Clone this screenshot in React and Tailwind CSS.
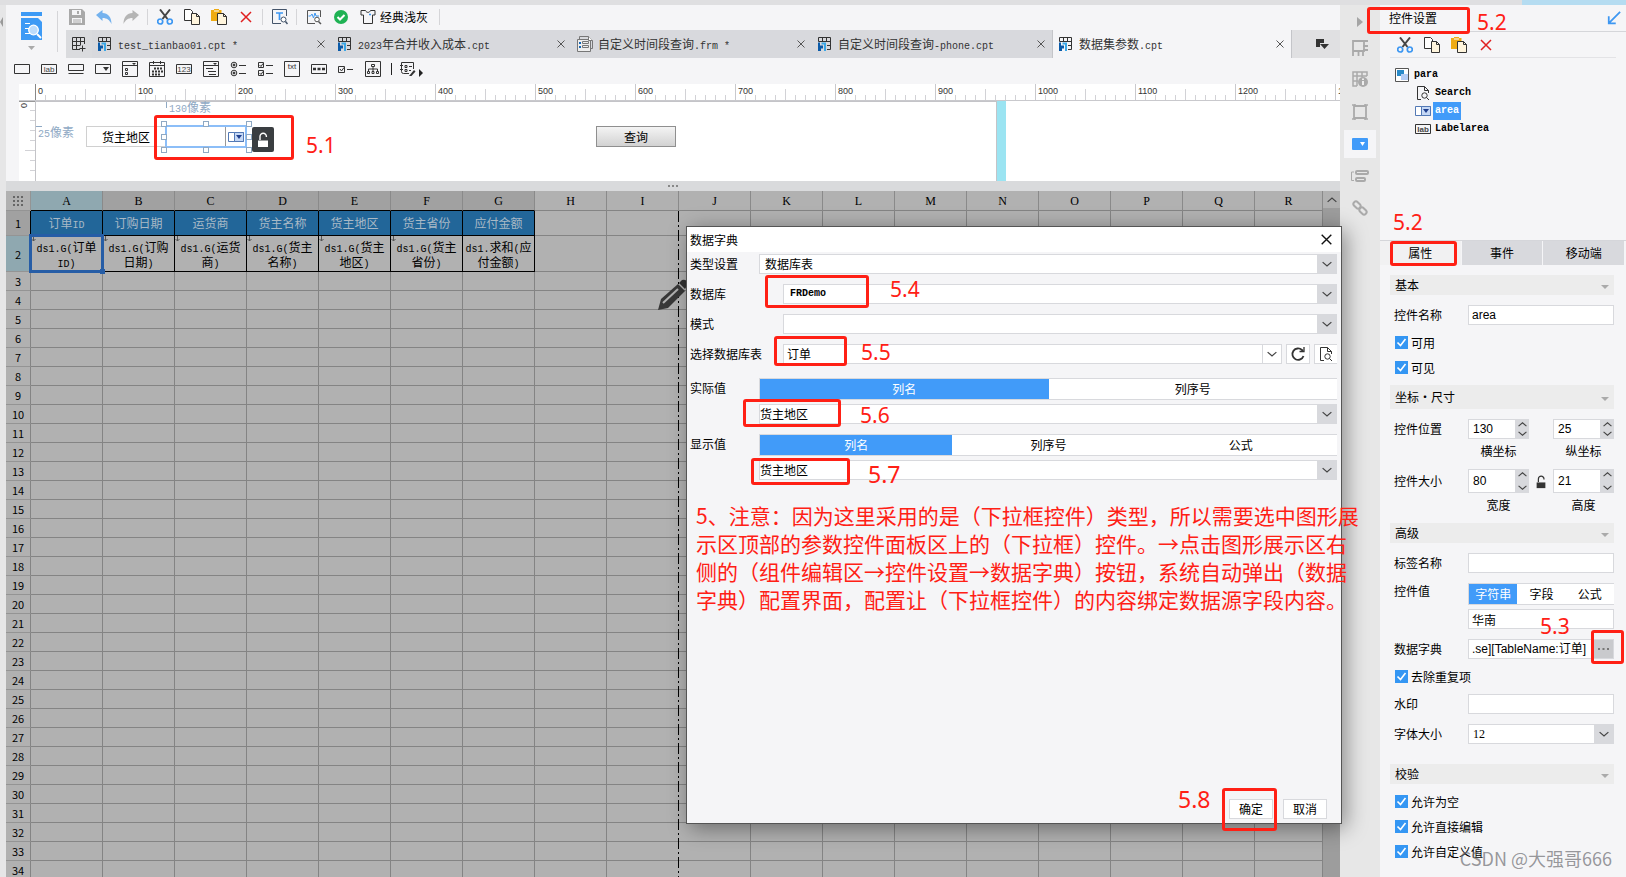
import React from "react";
import clsx from "clsx";

const SANS = "font-['Liberation_Sans','Noto_Sans_CJK_SC',sans-serif]";

/* ---------- text helpers ---------- */

// Latin runs are set in a smaller monospaced face, half as wide as the Chinese glyphs
const Mixed = ({ text }) => (
  <span className="whitespace-pre">
    {text
      .split(/([\x20-\x7e]+)/)
      .filter(Boolean)
      .map((part, i) => (
        <span
          key={i}
          className={/^[\x20-\x7e]/.test(part) ? "font-['Liberation_Mono',monospace] text-[10px] leading-[0px]" : ""}
        >
          {part}
        </span>
      ))}
  </span>
);

/* ---------- icons ---------- */

const Svg = ({ size = 16, color = "#333", children, className }) => (
  <svg
    width={size}
    height={size}
    viewBox="0 0 16 16"
    fill="none"
    stroke={color}
    strokeWidth="1"
    className={clsx("shrink-0", className)}
  >
    {children}
  </svg>
);

const SaveIcon = () => (
  <Svg color="none">
    <path d="M0 0h13l3 3v13H0z" fill="#a9a9a9" />
    <path d="M3 1h9v5H3zM3 9h10v5H3z" fill="#f5f5f7" />
    <path d="M8 2h2v3H8zM4 10.500h8v1H4zM4 12.500h8v1H4z" fill="#a9a9a9" />
  </Svg>
);

const UndoIcon = () => (
  <Svg color="none">
    <path d="M0 6 6.500 1v3C12 4 15.500 8 15.500 15 13.500 11 11 9 6.500 9v3z" fill="#74b2ee" />
  </Svg>
);

const RedoIcon = () => (
  <Svg color="none">
    <path d="M16 6 9.500 1v3C4 4 .5 8 .5 15 2.500 11 5 9 9.500 9v3z" fill="#b5b5b5" />
  </Svg>
);

const CutIcon = () => (
  <Svg>
    <path d="M3 .5 10.500 10M13 .5 5.500 10" strokeWidth="2" stroke="#444" />
    <circle cx="3.200" cy="12.500" r="2.500" stroke="#3d97f2" strokeWidth="1.700" />
    <circle cx="12.800" cy="12.500" r="2.500" stroke="#3d97f2" strokeWidth="1.700" />
  </Svg>
);

const CopyIcon = () => (
  <Svg>
    <path d="M.5.5h6l2 2v9h-8z" fill="#fff" />
    <path d="M7.500 4.500h5l3 3v8h-8z" fill="#fff5dd" />
    <path d="M12.500 4.500v3h3" />
  </Svg>
);

const PasteIcon = () => (
  <Svg>
    <path d="M0 1h3V0h5v1h2.500v11H0z" fill="#efab12" stroke="none" />
    <path d="M3 2h5" stroke="#fff" />
    <path d="M6.500 4.500h6l3 3v8h-9z" fill="#fff5dd" />
    <path d="M12.500 4.500v3h3" />
  </Svg>
);

const DeleteIcon = () => (
  <Svg color="#e02020">
    <path d="M3 3l10 10M13 3L3 13" strokeWidth="1.500" />
  </Svg>
);

const FindTextIcon = () => (
  <Svg color="#44546a">
    <path d="M9 14.500H.5V.5h14V7" />
    <path d="M4 4h7M7.500 4v7" stroke="#3d97f2" strokeWidth="1.700" />
    <circle cx="11.500" cy="10.500" r="2.500" fill="#fff" />
    <path d="M13.500 12.500l2 2.500" strokeWidth="1.500" />
  </Svg>
);

const PulseIcon = () => (
  <Svg color="#555">
    <path d="M9 14.500H1.500V1.500h13V8" />
    <path d="M2.500 7h2l1.500-2 1.500 4L9 4l1 3h3" stroke="#3d97f2" />
    <circle cx="11" cy="10.500" r="2.300" fill="#fff" />
    <path d="M12.500 12.500l2.500 2.500" strokeWidth="1.500" />
  </Svg>
);

const OkIcon = () => (
  <Svg color="none">
    <circle cx="8" cy="8" r="7" fill="#1fb254" />
    <path d="M4.500 8l2.500 2.500 4.500-4.500" stroke="#fff" strokeWidth="2" />
  </Svg>
);

const ShirtIcon = () => (
  <Svg>
    <path d="M1 1.500h4.500C6.500 4 9.500 4 10.500 1.500H15v4.500h-2.500v8.500h-9V6H1z" />
    <path d="M9 5.500h2" stroke="#3d97f2" strokeWidth="1.500" />
  </Svg>
);

const GridPlusIcon = () => (
  <Svg>
    <path d="M9 13.500H1.500v-12h12V8M1.500 5.500h12M1.500 9.500h8M5.500 1.500v12M9.500 1.500V9M8.500 12.500h6M11.500 9.500v6" />
  </Svg>
);

const CptIcon = () => (
  <Svg>
    <path d="M1.500 5.500v-4h12v12H10M1.500 5.500h12M5.500 1.500v4M9.500 1.500v4M10 9.500h4" />
    <path d="M1 6.500h2v3h3v3H4V15H1z" fill="#0a5aa8" stroke="none" />
    <path d="M4.500 6.500H9V15H7V8.500H4.500z" fill="#3ba7e6" stroke="none" />
  </Svg>
);

const FrmIcon = () => (
  <Svg color="#777">
    <path d="M2.500 3.500V.5h9l4 4v8h-2" />
    <path d="M.5 3.500h13v12H.5z" fill="#eee" />
    <path d="M2 6h2v2H2zM2 10h2v2H2z" fill="#1768b5" stroke="none" />
    <path d="M5.500 5.500h6v2h-6zM5.500 9.500h6v2h-6z" />
    <path d="M11.500.5v4h4" fill="#fff" />
  </Svg>
);

const CloseIcon = ({ size = 8, color = "#555" }) => (
  <Svg size={size} color={color}>
    <path d="M1 1l14 14M15 1L1 15" strokeWidth="2" />
  </Svg>
);

const Chevron = ({ up, size = 10 }) => (
  <Svg size={size} color="#444" className={up ? "rotate-180" : ""}>
    <path d="M1 5l7 6 7-6" strokeWidth="2" />
  </Svg>
);

const SearchDocIcon = () => (
  <Svg>
    <path d="M6 14.500H2.500V1.500h7l4 4V8M9.500 1.500v4h4" />
    <circle cx="9.500" cy="10.500" r="2.700" />
    <path d="M11.500 12.500l2.500 2.500" />
  </Svg>
);

const RefreshIcon = () => (
  <Svg>
    <path d="M13.500 10A5.700 5.700 0 1 1 12 4l1 1" strokeWidth="1.800" />
    <path d="M9.500 5.500H14V1" fill="none" strokeWidth="1.300" />
  </Svg>
);

const UnlockIcon = ({ color = "#333", size = 16 }) => (
  <Svg size={size} color={color}>
    <path d="M5 8V4.500a3.200 3.200 0 0 1 6.400 0V5" strokeWidth="1.400" />
    <path d="M3 8.500h10V15H3z" fill={color} stroke="none" />
  </Svg>
);

const ComboIcon = () => (
  <Svg color="#5379b5">
    <path d="M.5 3.500h15v9H.5z" fill="#fff" />
    <path d="M6.500 3.500h9v9h-9z" fill="#c5d8f5" />
    <path d="M8 6h6l-3 4z" fill="#1f3f8f" stroke="none" />
  </Svg>
);

const LabIcon = ({ label = "lab" }) => (
  <Svg>
    <path d="M.5 3.500h15v9H.5z" />
    <text x="8" y="11" fontSize="8" textAnchor="middle" fill="#444" stroke="none" fontFamily="Liberation Sans">
      {label}
    </text>
  </Svg>
);

// Palette of form widgets that can be dropped on the parameter pane
const widgetIcons = [
  <Svg><path d="M.5 3.500h15v9H.5z" /></Svg>,
  <LabIcon />,
  <Svg><path d="M.5 3.500h15v6H.5zM.5 12.500h15" /></Svg>,
  <Svg><path d="M.5 3.500h15v9H.5z" /><path d="M8 6h6l-3 4z" fill="#333" stroke="none" /></Svg>,
  <Svg>
    <path d="M.5.5h15v15H.5zM.5 4.500h15M3.500 7.500h2v2h-2zM3.500 11.500h2v2h-2z" />
    <path d="M10 2h4l-2 2z" fill="#333" stroke="none" />
  </Svg>,
  <Svg>
    <path d="M.5 1.500h15v14H.5zM.5 4.500h15M4.500 0v3M11.500 0v3" />
    <path d="M5 7.500h9M3 10.500h11M3 13.500h8" strokeDasharray="2 1" strokeWidth="2" />
  </Svg>,
  <LabIcon label="123" />,
  <Svg>
    <path d="M.5.5h15v15H.5zM.5 4.500h15M3 7.500h7M5 10.500h8M6 13.500h7" />
    <path d="M10 2h4l-2 2z" fill="#333" stroke="none" />
  </Svg>,
  <Svg>
    <circle cx="4" cy="4" r="2.800" /><circle cx="4" cy="12" r="2.800" />
    <circle cx="4" cy="4" r="1" fill="#333" /><circle cx="4" cy="12" r="1" fill="#333" />
    <path d="M9 4.500h7M9 12.500h7" />
  </Svg>,
  <Svg><path d="M1.500 1.500h5v5h-5zM1.500 9.500h5v5h-5zM9 4.500h7M9 12.500h7M2.500 4l1.500 1.500L6 2.500M2.500 12l1.500 1.500 2-3" /></Svg>,
  <Svg>
    <path d="M.5.5h15v15H.5z" />
    <text x="8" y="8" fontSize="8" textAnchor="middle" fill="#333" stroke="none" fontFamily="Liberation Sans">txt</text>
  </Svg>,
  <Svg>
    <path d="M.5 3.500h15v9H.5z" />
    <path d="M2 8h3M6.500 8h3M11 8h3" strokeWidth="2.500" />
  </Svg>,
  <Svg><path d="M.5 5.500h6v6h-6zM9 8.500h6M2 8l1.500 2L6 6.500" /></Svg>,
  <Svg><path d="M.5.500h15v15H.5zM6.500 3.500h3v2h-3zM2.500 10.500h2v2h-2zM7 10.500h2v2H7zM11.500 10.500h2v2h-2zM8 6v4M3.500 10V8h9v2" /></Svg>,
];

/* ---------- top area ---------- */

const IconButton = ({ label, children }) => (
  <button type="button" aria-label={label} className="flex h-[24px] w-[27px] items-center justify-center">
    {children}
  </button>
);

const Divider = () => (
  <div className="flex h-[16px] w-[7px] justify-center">
    <div className="w-px bg-[#d5d5d8]" />
  </div>
);

const tabs = [
  { name: "test_tianbao01.cpt *", icon: <CptIcon /> },
  { name: "2023年合并收入成本.cpt", icon: <CptIcon /> },
  { name: "自定义时间段查询.frm *", icon: <FrmIcon /> },
  { name: "自定义时间段查询-phone.cpt", icon: <CptIcon /> },
  { name: "数据集参数.cpt", icon: <CptIcon />, active: true },
];

const Header = () => (
  <header className="flex h-[53px] shrink-0">
    <button type="button" aria-label="预览" className="flex w-[51px] shrink-0 flex-col items-center gap-[6px] pt-[7px]">
      <svg width="22" height="28" viewBox="0 0 22 28">
        <path d="M0 0h21v4H0zM0 6h17l4 4v18H0z" fill="#3d9af5" />
        <path d="M4 11h5v1H4zM4 16h4v1H4zM4 21h5v1H4z" fill="#fff" />
        <circle cx="12.500" cy="18" r="4.800" fill="#bcdcfb" stroke="#fff" strokeWidth="1.300" />
        <path d="M16 22l4 4" stroke="#fff" strokeWidth="2" />
      </svg>
      <svg width="7" height="4" viewBox="0 0 7 4"><path d="M0 0h7L3.500 4z" fill="#aaa" /></svg>
    </button>
    <div className="my-[6px] w-px shrink-0 bg-[#d5d5d8]" />
    <div className="flex min-w-0 flex-1 flex-col pl-[5px]">
      <div className="flex h-[24px] items-center">
        <IconButton label="保存"><SaveIcon /></IconButton>
        <IconButton label="撤销"><UndoIcon /></IconButton>
        <IconButton label="重做"><RedoIcon /></IconButton>
        <Divider />
        <IconButton label="剪切"><CutIcon /></IconButton>
        <IconButton label="复制"><CopyIcon /></IconButton>
        <IconButton label="粘贴"><PasteIcon /></IconButton>
        <IconButton label="删除"><DeleteIcon /></IconButton>
        <Divider />
        <IconButton label="查找"><FindTextIcon /></IconButton>
        <Divider />
        <IconButton label="性能检测"><PulseIcon /></IconButton>
        <IconButton label="校验"><OkIcon /></IconButton>
        <button type="button" className="flex items-center gap-[4px] pl-[6px] pr-[8px] text-[12px]">
          <ShirtIcon />
          经典浅灰
        </button>
        <Divider />
      </div>
      <nav className="mt-px ml-[3px] flex h-[28px] bg-[#e0e0e2]">
        <button type="button" aria-label="新建" className="flex w-[26px] shrink-0 items-center justify-center bg-[#dadbde]">
          <GridPlusIcon />
        </button>
        {tabs.map((tab) => (
          <div
            key={tab.name}
            className={clsx(
              "flex w-[240px] shrink-0 items-center pl-[5px] pr-[7px]",
              tab.active ? "border-x border-[#c4c5c9] bg-[#f5f5f7]" : "bg-[#d8d9dd]"
            )}
          >
            {tab.icon}
            <a href="#tab" className="ml-[5px] flex-1 text-[12px] leading-[18px] text-[#333]">
              <Mixed text={tab.name} />
            </a>
            <button type="button" aria-label="关闭"><CloseIcon /></button>
          </div>
        ))}
        <button type="button" aria-label="更多" className="flex flex-1 items-center pl-[24px]">
          <svg width="13" height="10" viewBox="0 0 13 10">
            <path d="M0 0h8v4H4v4H0zM4 5h9L8.500 10z" fill="#333" />
          </svg>
        </button>
      </nav>
    </div>
  </header>
);

const WidgetBar = () => (
  <div className="flex h-[26px] shrink-0 items-start pl-[2px]">
    {widgetIcons.map((icon, i) => (
      <button key={i} type="button" aria-label={`控件${i + 1}`} className="flex h-[22px] w-[27px] items-center justify-center">
        {icon}
      </button>
    ))}
    <div className="mx-[5px] mt-[5px] h-[12px] w-px bg-[#222]" />
    <button type="button" aria-label="更多控件" className="flex h-[22px] items-center gap-[3px] pl-[3px]">
      <Svg>
        <path d="M9 12.500H3.500a2 2 0 0 1-2-2v-9h12V8M0 4.500h3M0 8.500h3M5 4.500h2v2H5zM9 5.500h3M5 8.500h2v2H5zM9 9.500h2" />
        <path d="M9 15l5-6 1.500 1.500-4 4.500z" fill="#333" stroke="none" />
      </Svg>
      <svg width="4" height="8" viewBox="0 0 4 8" className="mt-[8px]"><path d="M0 0l4 4-4 4z" fill="#222" /></svg>
    </button>
  </div>
);

/* ---------- parameter pane ---------- */

const Ruler = () => (
  <div className="ml-[13px] flex h-[17px] shrink-0 overflow-hidden border-b border-[#c9c9cd] bg-white pl-[16px]">
    {Array.from({ length: 14 }, (_, i) => (
      <div key={i} className="flex w-[100px] shrink-0">
        <svg width="100" height="17" viewBox="0 0 100 17" className="shrink-0">
          <path d="M.5 0v17" stroke={i === 0 ? "#888" : "#c9c9cd"} />
          <path d="M10.500 11v6M20.500 11v6M30.500 11v6M40.500 11v6M50.500 5v12M60.500 11v6M70.500 11v6M80.500 11v6M90.500 11v6" stroke="#d2d2d6" />
          <text x="3" y="10" fontSize="9" fill="#333" fontFamily="Liberation Sans">{i * 100}</text>
        </svg>
      </div>
    ))}
  </div>
);

const Handle = ({ className }) => (
  <span className={clsx("absolute size-[6px] border border-[#8fa9c4] bg-white", className)} />
);

const ParameterPane = () => (
  <section className="ml-[13px] flex h-[80px] shrink-0 bg-white">
    <svg width="17" height="80" viewBox="0 0 17 80" className="shrink-0">
      <path d="M16.500 0v80" stroke="#c4c4c8" />
      <path d="M11 9.500h5M11 19.500h5M11 29.500h5M11 39.500h5M6 49.500h10M11 59.500h5M11 69.500h5" stroke="#d2d2d6" />
      <path d="M0 .5h16" stroke="#999" />
      <text x="-7" y="8" fontSize="9" fill="#333" fontFamily="Liberation Sans" transform="rotate(-90)">0</text>
    </svg>
    {/* free canvas: widgets sit at their own coordinates */}
    <div className="relative w-[961px] border-r border-t border-[#c4c4c8]">
      <span className="absolute left-[130px] top-0 h-[6px] w-px bg-[#8fa9c4]" />
      <span className="absolute left-[133px] top-[-2px] text-[12px] leading-[14px] text-[#8fa9c4]"><Mixed text="130像素" /></span>
      <span className="absolute left-0 top-[24px] h-px w-[6px] bg-[#8fa9c4]" />
      <span className="absolute left-[2px] top-[23px] text-[12px] leading-[14px] text-[#8fa9c4]"><Mixed text="25像素" /></span>
      <label
        htmlFor="area-combo"
        className="absolute left-[50px] top-[24px] flex h-[21px] w-[80px] items-center border border-[#d0d0d0] pl-[15px] text-[12px]"
      >
        货主地区
      </label>
      <div className="absolute left-[129px] top-[23px] flex h-[23px] w-[82px] border-2 border-[#8cbef8] bg-white">
        <input id="area-combo" readOnly className="w-[59px] border-r border-[#999] outline-none" />
        <button type="button" aria-label="展开" className="flex flex-1 items-center justify-center"><ComboIcon /></button>
      </div>
      <Handle className="left-[125px] top-[19px]" />
      <Handle className="left-[167px] top-[19px]" />
      <Handle className="left-[210px] top-[19px]" />
      <Handle className="left-[125px] top-[32px]" />
      <Handle className="left-[210px] top-[32px]" />
      <Handle className="left-[125px] top-[45px]" />
      <Handle className="left-[167px] top-[45px]" />
      <Handle className="left-[210px] top-[45px]" />
      <button
        type="button"
        aria-label="解锁"
        className="absolute left-[216px] top-[25px] flex h-[25px] w-[22px] items-center justify-center rounded-[2px] bg-[#3a3e41]"
      >
        <UnlockIcon color="#fff" />
      </button>
      <button
        type="button"
        className="absolute left-[560px] top-[24px] h-[21px] w-[80px] border border-[#8f8f8f] bg-linear-to-b from-[#f4f4f4] to-[#d2d2d2] text-[12px] leading-[18px]"
      >
        查询
      </button>
    </div>
    <div className="w-[9px] bg-[#9be4f2]" />
  </section>
);

/* ---------- report grid ---------- */

const columns = "ABCDEFGHIJKLMNOPQR".split("");
const titles = ["订单ID", "订购日期", "运货商", "货主名称", "货主地区", "货主省份", "应付金额"];
const formulas = [
  ["ds1.G(订单", "ID)"],
  ["ds1.G(订购", "日期)"],
  ["ds1.G(运货", "商)"],
  ["ds1.G(货主", "名称)"],
  ["ds1.G(货主", "地区)"],
  ["ds1.G(货主", "省份)"],
  ["ds1.求和(应", "付金额)"],
];

const RowHead = ({ n, className }) => (
  <th
    scope="row"
    className={clsx(
      "border-b border-r border-b-[#949494] p-0 text-center font-['Noto_Sans_CJK_SC',sans-serif] text-[11px] leading-[16px] font-normal",
      className
    )}
  >
    {n}
  </th>
);

const Sheet = () => (
  <section className="relative flex min-h-0 flex-1 overflow-hidden bg-[#b1b1b1]">
    <div className="min-w-0 flex-1 overflow-hidden">
      <table className="w-full table-fixed border-separate border-spacing-0 text-[12px]">
        <thead>
          <tr className="h-[20px]">
            <th className="w-[25px] border-b border-r border-[#949494] p-0">
              <svg width="12" height="10" viewBox="0 0 12 10" className="mx-auto">
                <path d="M1 1h2M5 1h2M9 1h2M1 5h2M5 5h2M9 5h2M1 9h2M5 9h2M9 9h2" stroke="#666" strokeWidth="2" />
              </svg>
            </th>
            {columns.map((name, i) => (
              <th
                key={name}
                scope="col"
                className={clsx(
                  "border-b border-r border-r-[#8a8a8a] p-0 font-['Liberation_Serif',serif] text-[12px] leading-[18px] font-normal",
                  i < 17 && "w-[72px]",
                  i === 0 && "bg-[#8fa8b0]",
                  i > 0 && i < 7 && "bg-[#a1a1a1]",
                  i < 7 ? "border-b-black" : "border-b-[#848484]"
                )}
              >
                {name}
              </th>
            ))}
          </tr>
        </thead>
        <tbody>
          <tr className="h-[25px]">
            <RowHead n={1} className="border-r-black bg-[#a1a1a1]" />
            {columns.map((name, i) =>
              i < 7 ? (
                <td key={name} className="border-b border-r border-black bg-[#226699] p-0 text-center text-[#a9b9c6]">
                  <Mixed text={titles[i]} />
                </td>
              ) : (
                <td key={name} className="border-b border-r border-[#848484] p-0" />
              )
            )}
          </tr>
          <tr className="h-[36px]">
            <RowHead n={2} className="border-r-black bg-[#8fa8b0]" />
            {columns.map((name, i) =>
              i < 7 ? (
                <td key={name} className="relative border-b border-r border-black p-0 text-center leading-[15px]">
                  <Mixed text={formulas[i][0]} />
                  <br />
                  <Mixed text={formulas[i][1]} />
                  {i < 6 && (
                    <svg width="5" height="6" viewBox="0 0 5 6" className="absolute left-0 top-0">
                      <path d="M2.500 0v5M.5 3l2 2 2-2" stroke="#555" fill="none" />
                    </svg>
                  )}
                  {i === 0 && (
                    <>
                      <span className="absolute inset-[-2px] z-10 border-[3px] border-[#265da6]" />
                      <span className="absolute right-[-3px] bottom-[-3px] z-10 size-[5px] bg-[#265da6]" />
                    </>
                  )}
                </td>
              ) : (
                <td key={name} className="border-b border-r border-[#848484] p-0" />
              )
            )}
          </tr>
          {Array.from({ length: 32 }, (_, r) => (
            <tr key={r} className="h-[19px]">
              <RowHead n={r + 3} className="border-r-[#848484]" />
              {columns.map((name) => (
                <td key={name} className="border-b border-r border-[#848484] p-0" />
              ))}
            </tr>
          ))}
        </tbody>
      </table>
    </div>
    <div className="w-[17px] shrink-0 bg-[#9d9d9d]">
      <button type="button" aria-label="向上滚动" className="flex h-[17px] w-full items-center justify-center bg-[#b1b1b1]">
        <Chevron up />
      </button>
    </div>
    {/* page break */}
    <div className="absolute top-[20px] bottom-0 left-[672px] w-px bg-[repeating-linear-gradient(to_bottom,#000_0px,#000_11px,#b1b1b1_11px,#b1b1b1_14px,#000_14px,#000_16px,#b1b1b1_16px,#b1b1b1_19px)]" />
    <svg width="34" height="34" viewBox="0 0 34 34" className="absolute left-[650px] top-[87px]">
      <path d="M2 32l3-11L22 6l7 7-17 17z" fill="#383838" />
      <path d="M7 25L22 11" stroke="#b1b1b1" strokeWidth="2" />
      <path d="M23 5l3-3q5-1 6 4l-3 5z" fill="#333" />
    </svg>
  </section>
);

/* ---------- dialog ---------- */

const Combo = ({ id, value, className, textClass, flat }) => (
  <div className={clsx("relative flex h-[20px] border border-[#d8d9dd] bg-white", className)}>
    <select
      id={id}
      defaultValue={value}
      className={clsx("min-w-0 flex-1 appearance-none bg-transparent pr-[20px] text-[12px] leading-[18px] outline-none", textClass)}
    >
      <option value={value}>{value}</option>
    </select>
    <span
      className={clsx(
        "pointer-events-none absolute inset-y-[-1px] right-[-1px] flex w-[20px] items-center justify-center",
        flat ? "border border-[#d8d9dd]" : "bg-[#d8d9dd]"
      )}
    >
      <Chevron />
    </span>
  </div>
);

const Segmented = ({ items, className }) => (
  <div className={clsx("flex h-[22px] border-y border-l border-[#d8d9dd] bg-white text-[12px]", className)}>
    {items.map((item, i) => (
      <button key={item} type="button" className={clsx("flex-1 leading-[20px]", i === 0 && "bg-[#419bf9] text-white")}>
        {item}
      </button>
    ))}
  </div>
);

const DialogLabel = ({ htmlFor, children }) => (
  <label htmlFor={htmlFor} className="w-[69px] shrink-0 whitespace-nowrap leading-[20px]">
    {children}
  </label>
);

const Dialog = () => (
  <div
    role="dialog"
    aria-label="数据字典"
    className="absolute left-[686px] top-[226px] z-20 flex h-[598px] w-[656px] flex-col border border-[#555] bg-[#f5f5f7] text-[12px] shadow-[4px_4px_20px_rgba(0,0,0,0.4)]"
  >
    <div className="flex h-[25px] items-center justify-between bg-white pl-[3px] pr-[9px]">
      <h2 className="leading-[16px]">数据字典</h2>
      <button type="button" aria-label="关闭"><CloseIcon size={11} color="#111" /></button>
    </div>
    <form className="flex flex-1 flex-col pl-[3px] pr-[4px] pt-[2px]">
      <div className="flex">
        <DialogLabel htmlFor="d-type">类型设置</DialogLabel>
        <Combo id="d-type" value="数据库表" className="flex-1" textClass="pl-[5px]" />
      </div>
      <div className="mt-[10px] flex">
        <DialogLabel htmlFor="d-db">数据库</DialogLabel>
        <Combo id="d-db" value="FRDemo" className="ml-[24px] flex-1" textClass="pl-[6px] font-['Liberation_Mono',monospace] !text-[10px] font-semibold" />
      </div>
      <div className="mt-[10px] flex">
        <DialogLabel htmlFor="d-schema">模式</DialogLabel>
        <Combo id="d-schema" value="" className="ml-[24px] flex-1" />
      </div>
      <div className="mt-[10px] flex">
        <DialogLabel htmlFor="d-table">选择数据库表</DialogLabel>
        <Combo id="d-table" value="订单" className="ml-[24px] flex-1" textClass="pl-[3px]" flat />
        <button type="button" aria-label="刷新" className="ml-[4px] flex h-[20px] w-[24px] items-center justify-center border border-[#d8d9dd] bg-white">
          <RefreshIcon />
        </button>
        <button type="button" aria-label="预览" className="ml-[4px] flex h-[20px] w-[23px] items-center justify-center border border-r-0 border-[#d8d9dd] bg-white">
          <SearchDocIcon />
        </button>
      </div>
      <div className="mt-[14px] flex">
        <DialogLabel htmlFor="d-actual">实际值</DialogLabel>
        <div className="flex-1">
          <Segmented items={["列名", "列序号"]} />
          <Combo id="d-actual" value="货主地区" className="mt-[4px]" />
        </div>
      </div>
      <div className="mt-[10px] flex">
        <DialogLabel htmlFor="d-display">显示值</DialogLabel>
        <div className="flex-1">
          <Segmented items={["列名", "列序号", "公式"]} />
          <Combo id="d-display" value="货主地区" className="mt-[4px]" />
        </div>
      </div>
      <div className="mt-auto mr-[10px] mb-[4px] flex justify-end gap-[10px]">
        <button type="button" className="h-[20px] w-[44px] border border-[#d8d9dd] bg-white leading-[18px]">确定</button>
        <button type="button" className="h-[20px] w-[44px] border border-[#d8d9dd] bg-white leading-[18px]">取消</button>
      </div>
    </form>
  </div>
);

/* ---------- right side ---------- */

const SideStrip = () => (
  <aside className="flex w-[40px] shrink-0 flex-col items-center bg-[#e7e7e7]">
    <button type="button" aria-label="收起" className="flex h-[29px] items-center pt-[4px]">
      <svg width="6" height="10" viewBox="0 0 6 10"><path d="M0 0l6 5-6 5z" fill="#a5a5a5" /></svg>
    </button>
    <button type="button" aria-label="单元格元素" className="flex h-[28px] items-center">
      <Svg color="#aaa"><path d="M1 15V1h15M1 11h11V1M6.500 11v5M11 11v5M1 15v1M11 6h5M11 10h5" strokeWidth="1.800" /></Svg>
    </button>
    <button type="button" aria-label="单元格属性" className="flex h-[34px] items-center">
      <Svg color="#aaa">
        <path d="M5 15H1V1h14v4M1 5h14M5 1v14M10 1v5M1 10h5" strokeWidth="1.500" />
        <circle cx="11" cy="11" r="5" fill="#aaa" stroke="none" />
        <path d="M11 7.500v1.500M11 10v4" stroke="#eee" strokeWidth="2" />
      </Svg>
    </button>
    <button type="button" aria-label="悬浮元素" className="flex h-[32px] items-center">
      <Svg color="#aaa">
        <path d="M2 2h12v12H2z" strokeWidth="1.800" />
        <path d="M0 1h3V0M13 0v1h3M0 15h3v1M13 16v-1h3" strokeWidth="1.500" />
      </Svg>
    </button>
    <button type="button" aria-label="控件设置" className="mt-[2px] flex h-[28px] w-[32px] items-center justify-center bg-[#f5f5f7]">
      <svg width="16" height="12" viewBox="0 0 16 12">
        <rect width="16" height="12" rx="1" fill="#419bf9" />
        <path d="M8 4h5l-2.500 4z" fill="#fff" />
      </svg>
    </button>
    <button type="button" aria-label="条件属性" className="flex h-[36px] items-center">
      <svg width="18" height="12" viewBox="0 0 18 12" fill="none" stroke="#aaa">
        <path d="M3 2H.5v8.500H3" />
        <rect x="5" y="1" width="12" height="3" rx="1" strokeWidth="2" />
        <rect x="5" y="8" width="9" height="3" rx="1" strokeWidth="2" />
      </svg>
    </button>
    <button type="button" aria-label="超级链接" className="flex h-[28px] items-center">
      <Svg color="#aaa">
        <rect x="-4" y="-2.500" width="8" height="5" rx="2.500" transform="translate(5 5) rotate(45)" strokeWidth="2" />
        <rect x="-4" y="-2.500" width="8" height="5" rx="2.500" transform="translate(11 11) rotate(45)" strokeWidth="2" />
      </Svg>
    </button>
  </aside>
);

const SectionTitle = ({ children, className }) => (
  <button type="button" className={clsx("flex w-full items-center justify-between bg-[#ececec] px-[5px] leading-[18px]", className || "h-[20px]")}>
    {children}
    <svg width="8" height="4" viewBox="0 0 8 4" className="mt-[4px]"><path d="M0 0h8L4 4z" fill="#aaa" /></svg>
  </button>
);

const Field = ({ id, label, children, className, labelClass }) => (
  <div className={clsx("mt-[10px] flex pl-[4px]", className)}>
    <label htmlFor={id} className={clsx("w-[74px] shrink-0", labelClass || "leading-[20px]")}>{label}</label>
    <div className="min-w-0 flex-1">{children}</div>
  </div>
);

const TextInput = ({ id, value, label }) => (
  <input
    id={id}
    aria-label={label}
    defaultValue={value}
    className={clsx("block h-[20px] w-full border border-[#d8d9dd] bg-white px-[3px] outline-none", SANS)}
  />
);

const Check = ({ label }) => (
  <label className="flex h-[25px] items-center gap-[3px] pl-[5px] leading-[16px]">
    <span className="grid size-[13px] place-items-center">
      <input type="checkbox" defaultChecked className="col-start-1 row-start-1 size-[13px] appearance-none bg-white checked:bg-[#3496f3]" />
      <svg width="11" height="11" viewBox="0 0 11 11" className="pointer-events-none col-start-1 row-start-1">
        <path d="M1.500 5.500l3 3L9.500 2" stroke="#fff" strokeWidth="1.600" fill="none" />
      </svg>
    </span>
    {label}
  </label>
);

const Spinner = ({ id, value, tall, caption }) => (
  <div className="w-[61px]">
    <div className={clsx("flex border border-r-0 border-[#d8d9dd] bg-white", tall ? "h-[24px]" : "h-[20px]")}>
      <input id={id} defaultValue={value} aria-label={caption} className={clsx("w-[46px] px-[4px] outline-none", SANS)} />
      <span className="flex w-[14px] flex-col items-center justify-between bg-[#d8d9dd]">
        <button type="button" aria-label="增加"><Chevron up size={9} /></button>
        <button type="button" aria-label="减少"><Chevron size={9} /></button>
      </span>
    </div>
    <div className="mt-[2px] text-center leading-[20px]">{caption}</div>
  </div>
);

const TreeItem = ({ icon, name, root, selected }) => (
  <li className={clsx("flex h-[18px] items-center gap-[2px] font-['Liberation_Mono',monospace] text-[10px] font-bold", !root && "pl-[21px]")}>
    {icon}
    <span className={clsx("h-[18px] px-[2px] leading-[18px]", selected && "bg-[#419bf9] text-white")}>{name}</span>
  </li>
);

const PropertyPanel = () => (
  <aside className="w-[246px] shrink-0 bg-[#f5f5f7] text-[12px]">
    <div className="flex h-[27px] items-center justify-between border-b border-[#d5d6da] pl-[9px] pr-[5px]">
      <h2>控件设置</h2>
      <button type="button" aria-label="弹出">
        <Svg size={14} color="#3d97f2"><path d="M15 1L3 13M2 6v8h8" strokeWidth="2" /></Svg>
      </button>
    </div>
    <div className="mx-[10px] flex h-[26px] items-center border-b border-[#e3e3e6] pl-px">
      <IconButton label="剪切"><CutIcon /></IconButton>
      <IconButton label="复制"><CopyIcon /></IconButton>
      <IconButton label="粘贴"><PasteIcon /></IconButton>
      <IconButton label="删除"><DeleteIcon /></IconButton>
    </div>
    <ul className="h-[182px] pl-[14px] pt-[8px]">
      <TreeItem
        root
        name="para"
        icon={
          <Svg color="#555">
            <path d="M1.500 1.500h13v13h-13z" fill="#fff" />
            <path d="M3 3h7v6H3z" fill="#2a8ac8" stroke="none" />
            <path d="M7 7h7v6H7z" fill="#b4cdf5" stroke="none" />
          </Svg>
        }
      />
      <TreeItem name="Search" icon={<SearchDocIcon />} />
      <TreeItem name="area" icon={<ComboIcon />} selected />
      <TreeItem name="Labelarea" icon={<LabIcon />} />
    </ul>
    <div className="flex h-[25px] gap-px border-t border-[#d5d6da] pr-[2px]">
      <button type="button" className="flex-1 bg-[#f1f1f2]">属性</button>
      <button type="button" className="flex-1 bg-[#d8d9dd]">事件</button>
      <button type="button" className="flex-1 bg-[#d8d9dd]">移动端</button>
    </div>
    <form className="pl-[10px] pr-[12px] pt-[10px]">
      <SectionTitle>基本</SectionTitle>
      <Field id="p-name" label="控件名称"><TextInput id="p-name" value="area" /></Field>
      <div className="my-[5px]">
        <Check label="可用" />
        <Check label="可见" />
      </div>
      <SectionTitle className="h-[24px]">坐标・尺寸</SectionTitle>
      <Field id="p-x" label="控件位置">
        <div className="flex justify-between">
          <Spinner id="p-x" value="130" caption="横坐标" />
          <Spinner id="p-y" value="25" caption="纵坐标" />
        </div>
      </Field>
      <Field id="p-w" label="控件大小" className="!mt-[8px] mb-[8px]" labelClass="leading-[24px]">
        <div className="flex justify-between">
          <Spinner id="p-w" value="80" caption="宽度" tall />
          <button type="button" aria-label="锁定比例" className="flex h-[26px] items-center"><UnlockIcon size={14} /></button>
          <Spinner id="p-h" value="21" caption="高度" tall />
        </div>
      </Field>
      <SectionTitle>高级</SectionTitle>
      <Field id="p-label" label="标签名称"><TextInput id="p-label" /></Field>
      <Field id="p-value" label="控件值" labelClass="leading-[16px]">
        <Segmented items={["字符串", "字段", "公式"]} className="mb-[4px]" />
        <TextInput id="p-value" value="华南" />
      </Field>
      <Field id="p-dict" label="数据字典">
        <div className="flex h-[20px] border border-[#d8d9dd] bg-white">
          <input
            id="p-dict"
            readOnly
            value=".se][TableName:订单]"
            className={clsx("min-w-0 flex-1 pl-[3px] outline-none", SANS)}
          />
          <button type="button" aria-label="编辑数据字典" className="flex w-[19px] items-center justify-center bg-[#c9cacd]">
            <svg width="11" height="2" viewBox="0 0 11 2"><path d="M0 1h2M4.500 1h2M9 1h2" stroke="#777" strokeWidth="2" /></svg>
          </button>
        </div>
      </Field>
      <div className="mt-[5px]"><Check label="去除重复项" /></div>
      <Field id="p-mark" label="水印" className="!mt-[5px]"><TextInput id="p-mark" /></Field>
      <Field id="p-size" label="字体大小" className="mb-[20px]">
        <Combo id="p-size" value="12" textClass="pl-[4px] font-['Liberation_Serif',serif]" />
      </Field>
      <SectionTitle>校验</SectionTitle>
      <div className="mt-[5px]">
        <Check label="允许为空" />
        <Check label="允许直接编辑" />
        <Check label="允许自定义值" />
      </div>
    </form>
  </aside>
);

/* ---------- red tutorial marks ---------- */

const RedBox = ({ className }) => (
  <span className={clsx("absolute rounded-[3px] border-[3px] border-[#ff2015]", className)} />
);

const Step = ({ className, children }) => (
  <span className={clsx("absolute font-['Noto_Sans',sans-serif] text-[21px] leading-[24px]", className)}>{children}</span>
);

const Annotations = () => (
  <div className="pointer-events-none absolute inset-0 z-30 text-[#ff2015]">
    <RedBox className="left-[154px] top-[115px] h-[45px] w-[140px]" />
    <Step className="left-[306px] top-[133px]">5.1</Step>
    <RedBox className="left-[1367px] top-[7px] h-[27px] w-[103px]" />
    <Step className="left-[1477px] top-[10px]">5.2</Step>
    <RedBox className="left-[1390px] top-[241px] h-[25px] w-[67px]" />
    <Step className="left-[1393px] top-[210px]">5.2</Step>
    <RedBox className="left-[1591px] top-[630px] h-[34px] w-[33px]" />
    <Step className="left-[1540px] top-[614px]">5.3</Step>
    <RedBox className="left-[765px] top-[275px] h-[33px] w-[104px]" />
    <Step className="left-[890px] top-[277px]">5.4</Step>
    <RedBox className="left-[774px] top-[336px] h-[30px] w-[73px]" />
    <Step className="left-[861px] top-[340px]">5.5</Step>
    <RedBox className="left-[743px] top-[399px] h-[28px] w-[98px]" />
    <Step className="left-[860px] top-[403px]">5.6</Step>
    <RedBox className="left-[751px] top-[458px] h-[27px] w-[99px]" />
    <Step className="left-[868px] top-[462px] !text-[23px]">5.7</Step>
    <RedBox className="left-[1222px] top-[788px] h-[43px] w-[55px]" />
    <Step className="left-[1178px] top-[787px] !text-[23px]">5.8</Step>
    <p className="absolute left-[696px] top-[501px] whitespace-nowrap font-['Noto_Sans_CJK_SC',sans-serif] text-[21px] leading-[28px]">
      5、注意：因为这里采用的是（下拉框控件）类型，所以需要选中图形展
      <br />
      示区顶部的参数控件面板区上的（下拉框）控件。→点击图形展示区右
      <br />
      侧的（组件编辑区→控件设置→数据字典）按钮，系统自动弹出（数据
      <br />
      字典）配置界面，配置让（下拉框控件）的内容绑定数据源字段内容。
    </p>
  </div>
);

const App = () => (
  <div lang="zh-CN" className="relative flex h-screen flex-col overflow-hidden bg-[#f5f5f7] font-['Noto_Sans_CJK_SC',sans-serif] text-black">
    <div className="flex h-[5px] shrink-0">
      <div className="flex-1 bg-[#dfdfe1]" />
      <div className="w-[104px] bg-[#b5dcf1]" />
    </div>
    <div className="flex min-h-0 flex-1">
      <div className="w-[6px] shrink-0 bg-[#e6e6e7] pt-[12px]">
        <svg width="3" height="10" viewBox="0 0 3 10"><path d="M3 0v10L0 5z" fill="#999" /></svg>
      </div>
      <main className="flex min-w-0 flex-1 flex-col">
        <Header />
        <WidgetBar />
        <Ruler />
        <ParameterPane />
        <div className="flex h-[10px] shrink-0 items-center justify-center bg-[#d9dadc]">
          <svg width="10" height="2" viewBox="0 0 10 2"><path d="M0 1h2M4 1h2M8 1h2" stroke="#888" strokeWidth="2" /></svg>
        </div>
        <Sheet />
      </main>
      <SideStrip />
      <PropertyPanel />
    </div>
    <Dialog />
    <Annotations />
    <span className="absolute right-[14px] bottom-[7px] text-[18px] leading-[24px] text-[#6d6d72]/70">CSDN @大强哥666</span>
  </div>
);

export default App;
